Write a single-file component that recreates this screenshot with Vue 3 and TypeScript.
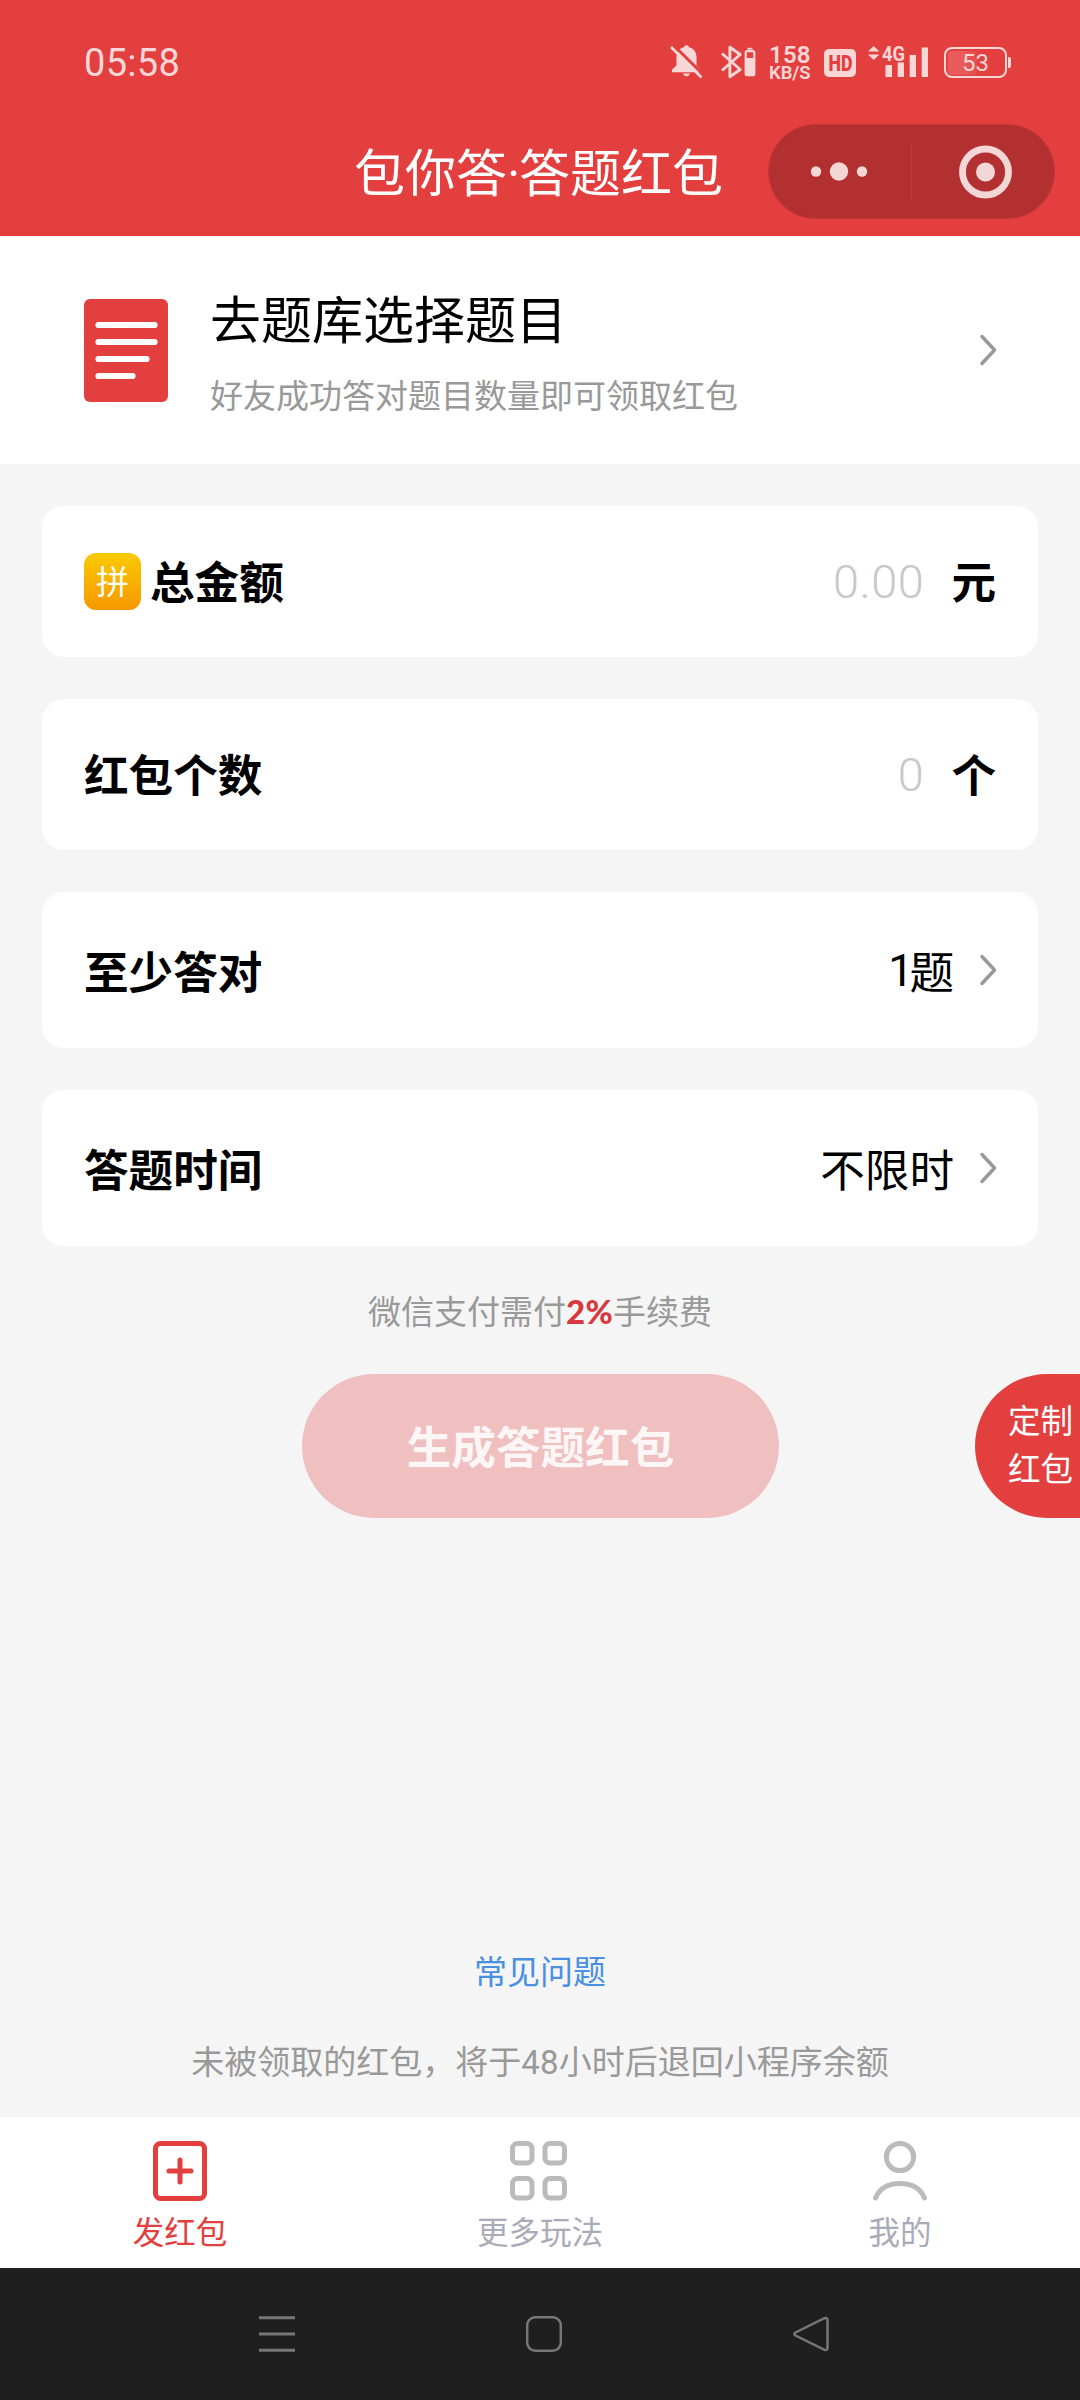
<script setup lang="ts">
interface Field {
  label: string
  value: string
  count?: string
  unit?: string
  badge?: string
  link?: boolean
}

const fields: Field[] = [
  { label: '总金额', value: '0.00', unit: '元', badge: '拼' },
  { label: '红包个数', value: '0', unit: '个' },
  { label: '至少答对', count: '1', value: '题', link: true },
  { label: '答题时间', value: '不限时', link: true },
]
</script>

<template>
  <div class="screen">
    <header class="top">
      <div class="status">
        <span class="time">05:58</span>
        <div class="indicators">
          <svg class="bell" width="34" height="34" viewBox="0 0 34 34">
            <path d="M16.500 .2c1.500 0 2.300 .8 2.500 2 4.800 1.200 7.500 5 7.500 9.800v8.500l4 4.500v2.200H2v-2.500L6.500 20.500V12c0-4.800 2.700-8.600 7.500-9.800 .2-1.200 1-2 2.500-2zM13 28.500h7c-.5 1.800-1.800 2.700-3.500 2.700S13.500 30.300 13 28.500z" fill="#fad7d7" />
            <path d="M3.500 .2l31 30.500" stroke="#e43f3f" stroke-width="3" />
            <path d="M1 2l30.500 30.500" stroke="#fad7d7" stroke-width="2.600" />
          </svg>
          <svg class="bt" width="35" height="34" viewBox="0 0 35 34" fill="none" stroke="#fad7d7">
            <path d="M1 8.500L19.200 24.500 8.900 31.700V2.300L19.200 9.500 1 25.500" stroke-width="2.900" stroke-linejoin="round" />
            <rect x="24.700" y="6.200" width="8.600" height="24" rx="1.500" stroke-width="2.200" />
            <path d="M26.500 3.700h5" stroke-width="1.800" />
            <path d="M24.500 13h9v17h-9z" fill="#fad7d7" stroke="none" />
          </svg>
          <div class="speed"><b>158</b><i>KB/S</i></div>
          <svg class="hd" width="32" height="28" viewBox="0 0 32 28">
            <rect width="32" height="28" rx="5" fill="#fad7d7" />
            <text x="4.500" y="21.500" font-size="21.500" font-weight="900" fill="#e43f3f" font-family="Roboto, sans-serif" textLength="24" lengthAdjust="spacingAndGlyphs">HD</text>
          </svg>
          <svg class="signal" width="60" height="36" viewBox="0 0 60 36" fill="#fad7d7">
            <path d="M0 7.500L5.700 2l5.700 5.500zM0 10.500h11.400L5.700 16z" />
            <rect x="17.500" y="21" width="6.500" height="12" />
            <rect x="29.700" y="18.500" width="6.300" height="14.500" />
            <rect x="41.700" y="11" width="6.300" height="22" />
            <rect x="53.700" y="3.500" width="6.300" height="29.500" />
            <text x="14" y="16.800" font-size="21" font-weight="700" font-family="Roboto, sans-serif" textLength="23" lengthAdjust="spacingAndGlyphs">4G</text>
          </svg>
          <div class="battery"><span>53</span></div>
          <div class="nub"></div>
        </div>
      </div>
      <div class="titlebar">
        <h1>包你答<span>·</span>答题红包</h1>
        <svg class="capsule" width="287" height="95" viewBox="0 0 287 95">
          <rect x=".5" y=".5" width="286" height="94" rx="47" fill="#b33031" stroke="#c33536" />
          <g fill="#f3d6d6">
            <circle cx="48" cy="47.500" r="5.200" />
            <circle cx="71" cy="47.500" r="9.200" />
            <circle cx="94" cy="47.500" r="5.200" />
            <circle cx="217.500" cy="48" r="9.500" />
          </g>
          <path d="M143.500 20v56" stroke="#c23a3b" />
          <circle cx="217.500" cy="48" r="23" fill="none" stroke="#f3d6d6" stroke-width="6.800" />
        </svg>
      </div>
    </header>

    <section class="bank">
      <svg width="84" height="103" viewBox="0 0 84 103">
        <rect width="84" height="103" rx="6" fill="#e43f3f" />
        <path d="M14.500 26h56M14.500 43h56M14.500 60h48M14.500 77h34" stroke="#fff" stroke-width="6.200" stroke-linecap="round" />
      </svg>
      <div class="bank-text">
        <h2>去题库选择题目</h2>
        <p>好友成功答对题目数量即可领取红包</p>
      </div>
      <svg class="chevron" width="18" height="34" viewBox="0 0 18 34"><path d="M3 3.500L15.500 17 3 30.500" /></svg>
    </section>

    <main>
      <div v-for="f in fields" :key="f.label" class="card" :class="{ tall: f.link }">
        <span v-if="f.badge" class="badge">{{ f.badge }}</span>
        <span class="label">{{ f.label }}</span>
        <span v-if="f.count" class="count">{{ f.count }}</span>
        <span :class="f.link ? 'value' : 'placeholder'">{{ f.value }}</span>
        <span v-if="f.unit" class="unit">{{ f.unit }}</span>
        <svg v-if="f.link" class="chevron" width="18" height="34" viewBox="0 0 18 34"><path d="M3 3.500L15.500 17 3 30.500" /></svg>
      </div>
      <p class="fee">微信支付需付<b>2%</b>手续费</p>
      <div class="actions">
        <button class="submit">生成答题红包</button>
        <div class="custom"><span>定制</span><span>红包</span></div>
      </div>
      <div class="foot">
        <a class="faq">常见问题</a>
        <p class="note">未被领取的红包，将于<span>48</span>小时后退回小程序余额</p>
      </div>
    </main>

    <nav class="tabs">
      <div class="tab active">
        <svg width="60" height="62" viewBox="0 0 60 62" fill="none" stroke="#e43f3f" stroke-width="5">
          <rect x="5.500" y="3.500" width="49" height="55" rx="5" />
          <path d="M30 20v22M19 31h22" stroke-linecap="round" />
        </svg>
        <span>发红包</span>
      </div>
      <div class="tab">
        <svg width="60" height="62" viewBox="0 0 60 62" fill="none" stroke="#bbb" stroke-width="5">
          <rect x="2.500" y="3.500" width="19.500" height="19.500" rx="5" />
          <rect x="35" y="3.500" width="19.500" height="19.500" rx="5" />
          <rect x="2.500" y="38.500" width="19.500" height="19.500" rx="5" />
          <rect x="35" y="38.500" width="19.500" height="19.500" rx="5" />
        </svg>
        <span>更多玩法</span>
      </div>
      <div class="tab">
        <svg width="60" height="62" viewBox="0 0 60 62" fill="none" stroke="#bbb" stroke-width="5">
          <circle cx="30" cy="17" r="13.600" />
          <path d="M5.500 58C9.500 48.500 18 43.500 30 43.500S50.500 48.500 54.500 58" stroke-linecap="round" />
        </svg>
        <span>我的</span>
      </div>
    </nav>

    <div class="system">
      <svg width="40" height="40" viewBox="0 0 40 40"><path d="M2 3.700h36M2 20h36M2 36.300h36" stroke-width="3" /></svg>
      <svg width="40" height="40" viewBox="0 0 40 40"><rect x="3.200" y="3.200" width="33.600" height="33.600" rx="8" stroke-width="2.500" /></svg>
      <svg width="40" height="40" viewBox="0 0 40 40"><path d="M33.500 4.200L4.500 18.500q-2.500 1.500 0 3L33.500 35.800q3 1 3-2V6.200q0-3-3-2z" stroke-width="2.500" /></svg>
    </div>
  </div>
</template>

<style>
body {
  margin: 0;
  background: #f5f5f5;
}
</style>

<style scoped>
.screen {
  width: 1080px;
  height: 2400px;
  display: flex;
  flex-direction: column;
  overflow: hidden;
  background: #f5f5f5;
  color: #000;
  font-family: "Noto Sans CJK SC", sans-serif;
}
h1, h2, p { margin: 0; font-weight: 400; }
svg { display: block; flex: none; overflow: visible; }
.top { height: 236px; background: #e43f3f; }
.status {
  height: 124px;
  padding: 0 69px 0 84px;
  box-sizing: border-box;
  display: flex;
  justify-content: space-between;
  align-items: center;
  color: #fad7d7;
  font-family: Roboto, sans-serif;
}
.time { font-size: 38px; line-height: 44px; letter-spacing: .3px; margin-top: 1px; }
.indicators { display: flex; align-items: center; }
.bell { margin-right: 17px; }
.bt { margin-right: 13px; }
.speed { width: 44px; margin-right: 11px; margin-top: 4px; display: flex; flex-direction: column; }
.speed b { font-size: 24px; line-height: 19px; font-weight: 600; letter-spacing: .2px; }
.speed i { font-size: 18.500px; line-height: 17px; font-style: normal; font-weight: 600; letter-spacing: -.1px; white-space: nowrap; }
.hd { margin: 2px 12px 0 0; }
.signal { margin-right: 16px; }
.battery {
  width: 63px;
  height: 31px;
  box-sizing: border-box;
  border: 2px solid #fad7d7;
  border-radius: 8px;
  padding: 2px;
  text-align: center;
  font-size: 24px;
  line-height: 24px;
}
.battery span {
  display: block;
  border-radius: 4px;
  background: linear-gradient(90deg, #ea5c5c 25%, #e64b4b 53%, transparent 53%);
}
.nub { width: 3px; height: 11px; margin-left: 1px; background: #fad7d7; border-radius: 0 2px 2px 0; }
.titlebar { height: 95px; display: flex; align-items: center; justify-content: flex-end; padding-right: 25px; }
.titlebar h1 { color: #fff; font-size: 51px; line-height: 60px; margin: 2px 45px 0 0; white-space: nowrap; }
.titlebar h1 span { font-family: Roboto, sans-serif; display: inline-block; width: 12px; text-align: center; }
.bank {
  height: 228px;
  box-sizing: border-box;
  padding: 0 83px 0 84px;
  background: #fff;
  display: flex;
  align-items: center;
}
.bank-text { flex: 1; margin: -3px 0 0 42px; }
.bank h2 { font-size: 51px; line-height: 76px; }
.bank p { font-size: 33px; line-height: 50px; margin-top: 14px; color: #999; }
.chevron { fill: none; stroke: #999; stroke-width: 3.500; stroke-linecap: round; stroke-linejoin: round; }
main { flex: 1; display: flex; flex-direction: column; padding-top: 42px; }
.card {
  height: 151px;
  box-sizing: border-box;
  margin: 0 42px 42px;
  padding: 0 42px;
  border-radius: 22px;
  background: #fff;
  display: flex;
  align-items: center;
  font-size: 44.600px;
  line-height: 66px;
}
.tall { height: 156px; padding-right: 41px; }
.tall:nth-child(4) { margin-bottom: 0; }
.badge {
  width: 57px;
  height: 57px;
  border-radius: 12px;
  margin-right: 9px;
  background: linear-gradient(#f9ca00, #f69800);
  color: #fff;
  font-size: 33px;
  line-height: 55px;
  text-align: center;
}
.label { flex: 1; font-weight: 700; margin-top: -3px; }
.unit { font-weight: 700; margin: -3px 0 0 27px; }
.tall .label { margin-top: -1px; }
.placeholder { font-family: Roboto, sans-serif; font-weight: 350; font-size: 46.800px; letter-spacing: .6px; color: #c8c8c8; }
.value { margin: -1px 25px 0 0; }
.count { font-family: Roboto, sans-serif; letter-spacing: -4px; margin-top: 2px; }
.fee { margin-top: 39px; text-align: center; font-size: 33px; line-height: 50px; color: #999; }
.fee b { font-family: Lato, sans-serif; font-weight: 900; letter-spacing: .3px; color: #d8393f; }
.actions { display: flex; margin-top: 38px; justify-content: space-between; padding-left: 302px; }
.submit {
  width: 477px;
  height: 144px;
  border: 0;
  padding: 0 0 2px;
  border-radius: 72px;
  background: #f0bfc0;
  color: #fdf6f6;
  font: 700 44.600px/142px "Noto Sans CJK SC", sans-serif;
}
.custom {
  width: 105px;
  height: 144px;
  box-sizing: border-box;
  padding: 21px 0 0 33px;
  border-radius: 72px 0 0 72px;
  background: #e43f3f;
  color: #fff;
  font-size: 32.500px;
  line-height: 47.500px;
  display: flex;
  flex-direction: column;
}
.foot { margin-top: auto; padding-bottom: 29px; display: flex; flex-direction: column; align-items: center; font-size: 33px; line-height: 50px; }
.faq { color: #4a90e2; margin-bottom: 40px; }
.note { color: #999; white-space: nowrap; }
.note span { font-family: Roboto, sans-serif; letter-spacing: .3px; }
.tabs { height: 151px; background: #fff; display: flex; }
.tab {
  flex: 1;
  display: flex;
  flex-direction: column;
  align-items: center;
  padding-top: 23px;
  color: #aaabb8;
  font-size: 31.500px;
  line-height: 46px;
}
.tab span { margin-top: 5px; }
.active { color: #e43f3f; }
.system {
  height: 132px;
  background: #1f1f1f;
  display: flex;
  gap: 227px;
  padding: 46px 0 0 257px;
  box-sizing: border-box;
  fill: none;
  stroke: #777;
}
</style>
